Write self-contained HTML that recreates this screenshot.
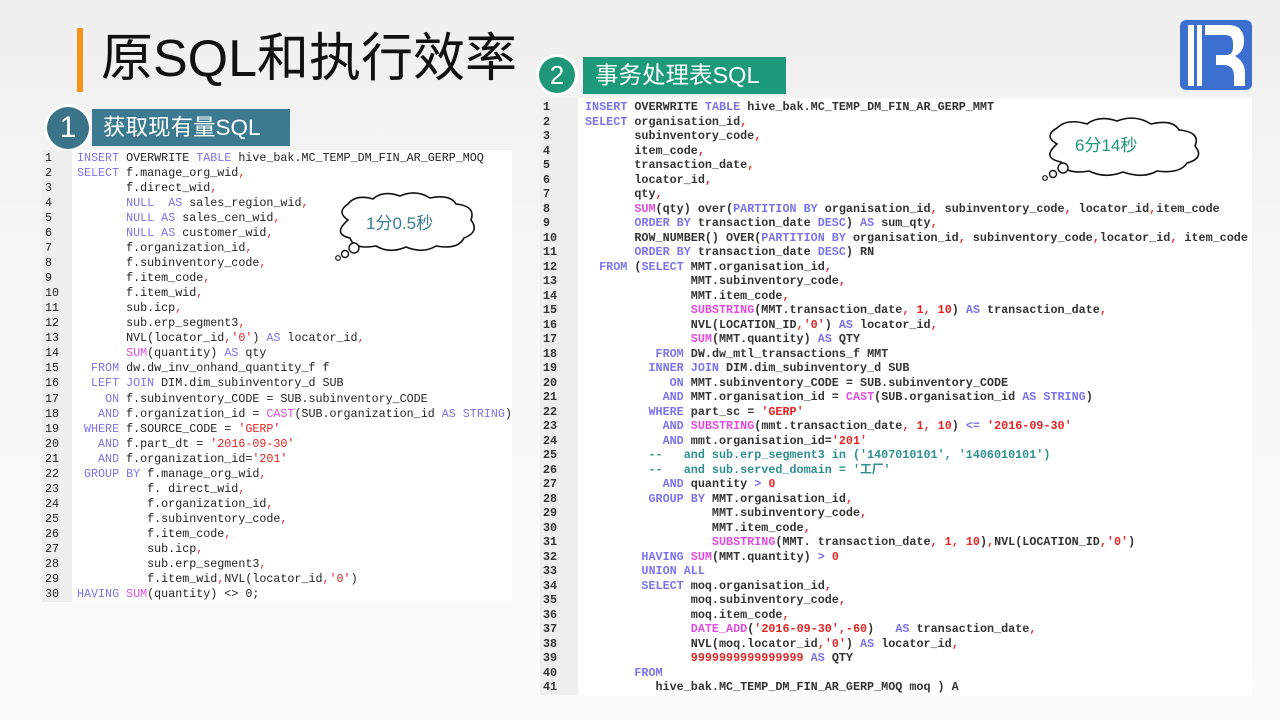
<!DOCTYPE html>
<html><head><meta charset="utf-8">
<style>
*{margin:0;padding:0;box-sizing:border-box}
body{width:1280px;height:720px;overflow:hidden;position:relative;background:linear-gradient(180deg,#efefef 0%,#f7f7f7 40%,#fbfbfb 100%);font-family:"Liberation Sans","Noto Sans CJK SC",sans-serif}
.abs{position:absolute}
.code{position:absolute;background:#fff;font-family:"Liberation Mono","Noto Sans CJK SC",monospace;white-space:pre;color:#222}
.gut{position:absolute;left:0;top:0;bottom:0;background:#eeeeee}
.k{color:#7a74ee}.f{color:#e24de0}.s{color:#e52424}.c{color:#2f8f8f}.p{color:#d33}
#L{left:42px;top:150px;width:470px;height:452px;font-size:11.7px;line-height:15.03px}
#L .gut{width:30px}
#L .t{position:absolute;left:35px;top:1px}
#L .n{position:absolute;left:3px;top:1px;color:#222}
#R{left:540px;top:98px;width:712px;height:597px;font-size:11.75px;line-height:14.5px;font-weight:bold;color:#333}
#R .gut{width:38px}
#R .t{position:absolute;left:45px;top:2px}
#R .n{position:absolute;left:3px;top:2px;color:#333}
.bub{font-family:"Liberation Sans","Noto Sans CJK SC",sans-serif;position:absolute;font-size:17px}
</style></head><body>
<div class="abs" style="left:77px;top:28px;width:6px;height:64px;background:#f39416"></div>
<div class="abs" style="left:101px;top:25px;font-size:52px;line-height:68px;color:#111">原SQL和执行效率</div>

<div class="abs" style="left:44px;top:104px;width:48px;height:48px;border-radius:50%;background:#fff"></div>
<div class="abs" style="left:47px;top:107px;width:42px;height:42px;border-radius:50%;background:#3b7489;color:#fff;font-size:30px;line-height:42px;text-align:center">1</div>
<div class="abs" style="left:92px;top:109px;width:198px;height:37px;background:#3b7a91;color:#fff;font-size:22.5px;line-height:37px;padding-left:11px">获取现有量SQL</div>

<div class="abs" style="left:536px;top:54px;width:42px;height:42px;border-radius:50%;background:#fff"></div>
<div class="abs" style="left:539px;top:57px;width:36px;height:36px;border-radius:50%;background:#1f9677;color:#fff;font-size:26px;line-height:36px;text-align:center">2</div>
<div class="abs" style="left:583px;top:57px;width:203px;height:37px;background:#1d9a79;color:#fff;font-size:23.5px;line-height:37px;padding-left:12px">事务处理表SQL</div>

<svg class="abs" style="left:1178px;top:18px" width="76" height="74" viewBox="0 0 76 74">
<rect x="2" y="2" width="72" height="70" rx="6" fill="#3c6fd0"/>
<rect x="10" y="7" width="6" height="61" fill="#fff"/>
<rect x="19" y="7" width="5" height="61" fill="#fff"/>
<path d="M27 7 H50 Q66 7 66 23 Q66 34 57 38 Q67 44 67 55 V68 H56 V58 Q56 47 45 47 H38 V37 H48 Q55 37 55 29 V25 Q55 17 47 17 H27 Z" fill="#fff"/>
</svg>

<div class="code" id="L"><div class="gut"></div><div class="n">1
2
3
4
5
6
7
8
9
10
11
12
13
14
15
16
17
18
19
20
21
22
23
24
25
26
27
28
29
30</div><div class="t"><span class="k">INSERT</span> OVERWRITE <span class="k">TABLE</span> hive_bak.MC_TEMP_DM_FIN_AR_GERP_MOQ
<span class="k">SELECT</span> f.manage_org_wid<span class="p">,</span>
       f.direct_wid<span class="p">,</span>
       <span class="k">NULL</span>  <span class="k">AS</span> sales_region_wid<span class="p">,</span>
       <span class="k">NULL AS</span> sales_cen_wid<span class="p">,</span>
       <span class="k">NULL AS</span> customer_wid<span class="p">,</span>
       f.organization_id<span class="p">,</span>
       f.subinventory_code<span class="p">,</span>
       f.item_code<span class="p">,</span>
       f.item_wid<span class="p">,</span>
       sub.icp<span class="p">,</span>
       sub.erp_segment3<span class="p">,</span>
       NVL(locator_id<span class="p">,</span><span class="s">'0'</span>) <span class="k">AS</span> locator_id<span class="p">,</span>
       <span class="f">SUM</span>(quantity) <span class="k">AS</span> qty
  <span class="k">FROM</span> dw.dw_inv_onhand_quantity_f f
  <span class="k">LEFT JOIN</span> DIM.dim_subinventory_d SUB
    <span class="k">ON</span> f.subinventory_CODE = SUB.subinventory_CODE
   <span class="k">AND</span> f.organization_id = <span class="f">CAST</span>(SUB.organization_id <span class="k">AS STRING</span>)
 <span class="k">WHERE</span> f.SOURCE_CODE = <span class="s">'GERP'</span>
   <span class="k">AND</span> f.part_dt = <span class="s">'2016-09-30'</span>
   <span class="k">AND</span> f.organization_id=<span class="s">'201'</span>
 <span class="k">GROUP BY</span> f.manage_org_wid<span class="p">,</span>
          f. direct_wid<span class="p">,</span>
          f.organization_id<span class="p">,</span>
          f.subinventory_code<span class="p">,</span>
          f.item_code<span class="p">,</span>
          sub.icp<span class="p">,</span>
          sub.erp_segment3<span class="p">,</span>
          f.item_wid<span class="p">,</span>NVL(locator_id<span class="p">,</span><span class="s">'0'</span>)
<span class="k">HAVING</span> <span class="f">SUM</span>(quantity) &lt;&gt; 0;</div></div>

<div class="code" id="R"><div class="gut"></div><div class="n">1
2
3
4
5
6
7
8
9
10
11
12
13
14
15
16
17
18
19
20
21
22
23
24
25
26
27
28
29
30
31
32
33
34
35
36
37
38
39
40
41</div><div class="t"><span class="k">INSERT</span> OVERWRITE <span class="k">TABLE</span> hive_bak.MC_TEMP_DM_FIN_AR_GERP_MMT
<span class="k">SELECT</span> organisation_id<span class="p">,</span>
       subinventory_code<span class="p">,</span>
       item_code<span class="p">,</span>
       transaction_date<span class="p">,</span>
       locator_id<span class="p">,</span>
       qty<span class="p">,</span>
       <span class="f">SUM</span>(qty) over(<span class="k">PARTITION BY</span> organisation_id<span class="p">,</span> subinventory_code<span class="p">,</span> locator_id<span class="p">,</span>item_code
       <span class="k">ORDER BY</span> transaction_date <span class="k">DESC</span>) <span class="k">AS</span> sum_qty<span class="p">,</span>
       ROW_NUMBER() OVER(<span class="k">PARTITION BY</span> organisation_id<span class="p">,</span> subinventory_code<span class="p">,</span>locator_id<span class="p">,</span> item_code
       <span class="k">ORDER BY</span> transaction_date <span class="k">DESC</span>) RN
  <span class="k">FROM</span> (<span class="k">SELECT</span> MMT.organisation_id<span class="p">,</span>
               MMT.subinventory_code<span class="p">,</span>
               MMT.item_code<span class="p">,</span>
               <span class="f">SUBSTRING</span>(MMT.transaction_date<span class="p">,</span> <span class="s">1</span><span class="p">,</span> <span class="s">10</span>) <span class="k">AS</span> transaction_date<span class="p">,</span>
               NVL(LOCATION_ID<span class="p">,</span><span class="s">'0'</span>) <span class="k">AS</span> locator_id<span class="p">,</span>
               <span class="f">SUM</span>(MMT.quantity) <span class="k">AS</span> QTY
          <span class="k">FROM</span> DW.dw_mtl_transactions_f MMT
         <span class="k">INNER JOIN</span> DIM.dim_subinventory_d SUB
            <span class="k">ON</span> MMT.subinventory_CODE = SUB.subinventory_CODE
           <span class="k">AND</span> MMT.organisation_id = <span class="f">CAST</span>(SUB.organisation_id <span class="k">AS STRING</span>)
         <span class="k">WHERE</span> part_sc = <span class="s">'GERP'</span>
           <span class="k">AND</span> <span class="f">SUBSTRING</span>(mmt.transaction_date<span class="p">,</span> <span class="s">1</span><span class="p">,</span> <span class="s">10</span>) <span class="k">&lt;=</span> <span class="s">'2016-09-30'</span>
           <span class="k">AND</span> mmt.organisation_id=<span class="s">'201'</span>
         <span class="c">--   and sub.erp_segment3 in ('1407010101', '1406010101')</span>
         <span class="c">--   and sub.served_domain = '工厂'</span>
           <span class="k">AND</span> quantity <span class="k">&gt;</span> <span class="s">0</span>
         <span class="k">GROUP BY</span> MMT.organisation_id<span class="p">,</span>
                  MMT.subinventory_code<span class="p">,</span>
                  MMT.item_code<span class="p">,</span>
                  <span class="f">SUBSTRING</span>(MMT. transaction_date<span class="p">,</span> <span class="s">1</span><span class="p">,</span> <span class="s">10</span>)<span class="p">,</span>NVL(LOCATION_ID<span class="p">,</span><span class="s">'0'</span>)
        <span class="k">HAVING</span> <span class="f">SUM</span>(MMT.quantity) <span class="k">&gt;</span> <span class="s">0</span>
        <span class="k">UNION ALL</span>
        <span class="k">SELECT</span> moq.organisation_id<span class="p">,</span>
               moq.subinventory_code<span class="p">,</span>
               moq.item_code<span class="p">,</span>
               <span class="f">DATE_ADD</span>(<span class="s">'2016-09-30'</span><span class="p">,</span><span class="s">-60</span>)   <span class="k">AS</span> transaction_date<span class="p">,</span>
               NVL(moq.locator_id<span class="p">,</span><span class="s">'0'</span>) <span class="k">AS</span> locator_id<span class="p">,</span>
               <span class="s">9999999999999999</span> <span class="k">AS</span> QTY
       <span class="k">FROM</span>
          hive_bak.MC_TEMP_DM_FIN_AR_GERP_MOQ moq ) A</div></div>

<svg class="abs" style="left:328px;top:190px" width="155" height="72" viewBox="0 0 155 72">
<path d="M20 30 Q8 22 20 14 Q28 4 45 9 Q55 0 72 6 Q88 -1 102 8 Q122 4 128 14 Q148 16 143 30 Q152 42 136 48 Q130 60 108 56 Q95 64 78 57 Q62 64 48 56 Q26 60 22 48 Q4 44 20 30 Z" fill="#fff" stroke="#111" stroke-width="1.6"/>
<circle cx="26" cy="58" r="5" fill="#fff" stroke="#111" stroke-width="1.4"/>
<circle cx="17" cy="64" r="3.5" fill="#fff" stroke="#111" stroke-width="1.4"/>
<circle cx="10" cy="68" r="2.3" fill="#fff" stroke="#111" stroke-width="1.2"/>
</svg>
<div class="bub" style="left:366px;top:209px;color:#3a7a94">1分0.5秒</div>

<svg class="abs" style="left:1035px;top:116px" width="175" height="72" viewBox="0 0 175 72">
<path d="M22 28 Q8 20 22 12 Q32 2 52 8 Q64 -1 82 5 Q100 -2 116 8 Q138 3 144 14 Q166 16 160 30 Q170 42 152 47 Q145 58 122 55 Q108 63 88 56 Q70 63 54 55 Q30 59 26 46 Q6 42 22 28 Z" fill="#fff" stroke="#111" stroke-width="1.6"/>
<circle cx="28" cy="52" r="5" fill="#fff" stroke="#111" stroke-width="1.4"/>
<circle cx="18" cy="58" r="3.5" fill="#fff" stroke="#111" stroke-width="1.4"/>
<circle cx="10" cy="62" r="2.3" fill="#fff" stroke="#111" stroke-width="1.2"/>
</svg>
<div class="bub" style="left:1075px;top:131px;color:#1f9677">6分14秒</div>
</body></html>
